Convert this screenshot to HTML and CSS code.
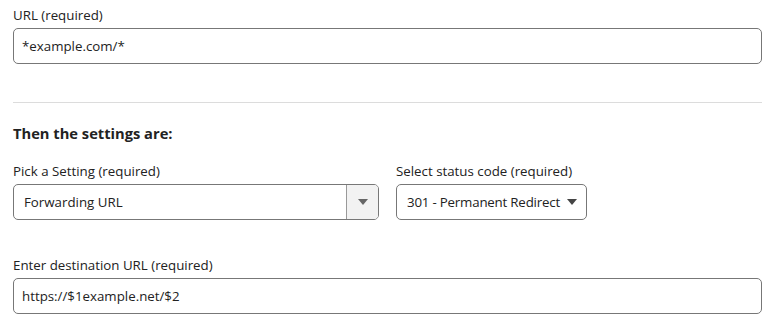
FILE: index.html
```html
<!DOCTYPE html>
<html>
<head>
<meta charset="utf-8">
<link rel="stylesheet" href="styles.css">
</head>
<body>
<div class="form">
  <div class="field field-url">
    <label class="label">URL (required)</label>
    <div class="input">*example.com/*</div>
  </div>
  <hr class="divider">
  <h3 class="heading">Then the settings are:</h3>
  <div class="row">
    <div class="field field-setting">
      <label class="label">Pick a Setting (required)</label>
      <div class="select">
        <span class="select-value">Forwarding URL</span>
        <span class="select-btn"><span class="caret"></span></span>
      </div>
    </div>
    <div class="field field-status">
      <label class="label">Select status code (required)</label>
      <div class="native-select">
        <span class="ns-text">301 - Permanent Redirect</span>
        <span class="caret dark"></span>
      </div>
    </div>
  </div>
  <div class="field field-dest">
    <label class="label">Enter destination URL (required)</label>
    <div class="input">https://$1example.net/$2</div>
  </div>
</div>
</body>
</html>
```

FILE: styles.css
```css
html, body {
  margin: 0;
  padding: 0;
  background: #fff;
}
body {
  font-family: "Open Sans", "Noto Sans", sans-serif;
  font-size: 13.3px;
  color: #222;
}
.form {
  width: 749px;
  padding: 6px 0 0 13px;
}
.field {
  display: flex;
  flex-direction: column;
}
.label {
  display: block;
  line-height: 18px;
  margin-bottom: 4px;
  color: #222;
}
.input {
  box-sizing: border-box;
  height: 36px;
  border: 1px solid #777;
  border-radius: 5px;
  padding: 0 8px;
  display: flex;
  align-items: center;
  color: #222;
}
.divider {
  border: 0;
  border-top: 1px solid #dcdcdc;
  margin: 38px 0 0 0;
  height: 0;
}
.heading {
  font-size: 14.7px;
  font-weight: 700;
  margin: 20px 0 0 0;
  line-height: 20px;
  color: #222;
}
.row {
  display: flex;
  gap: 17px;
  margin-top: 19px;
}
.field-setting {
  width: 366px;
}
.select {
  box-sizing: border-box;
  height: 36px;
  border: 1px solid #777;
  border-radius: 5px;
  display: flex;
  overflow: hidden;
}
.select-value {
  flex: 1;
  display: flex;
  align-items: center;
  padding-left: 10px;
}
.select-btn {
  width: 31px;
  border-left: 1px solid #999;
  background: #f2f2f2;
  display: flex;
  align-items: center;
  justify-content: center;
}
.caret {
  width: 0;
  height: 0;
  border-left: 5px solid transparent;
  border-right: 5px solid transparent;
  border-top: 6px solid #666;
}
.caret.dark {
  border-top-color: #444;
  margin-left: 2px;
}
.field-status {
  width: 191px;
}
.native-select {
  box-sizing: border-box;
  height: 36px;
  border: 1px solid #777;
  border-radius: 5px;
  display: flex;
  align-items: center;
  padding: 0 9px 0 10px;
  justify-content: space-between;
  white-space: nowrap;
}
.ns-text {
  letter-spacing: -0.2px;
}
.field-dest {
  margin-top: 36px;
}
```
